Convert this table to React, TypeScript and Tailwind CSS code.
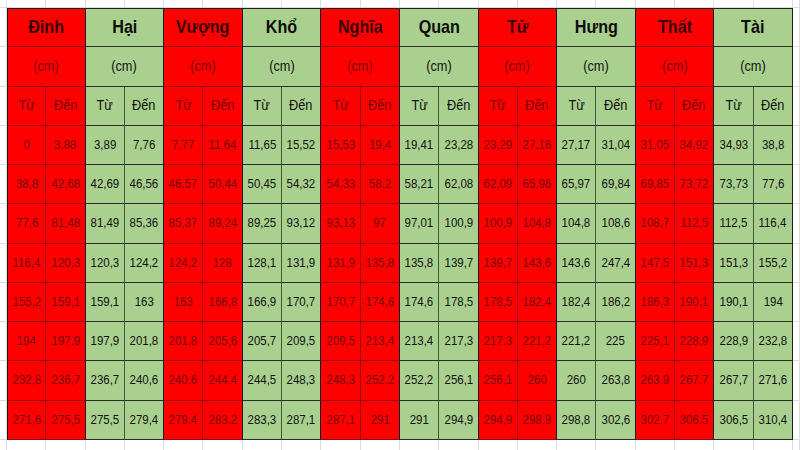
import React from "react";

type Group = { name: string; red: boolean; rows: [string, string][] };

const groups: Group[] = [
  { name: "Đinh", red: true, rows: [["0", "3,88"], ["38,8", "42,68"], ["77,6", "81,48"], ["116,4", "120,3"], ["155,2", "159,1"], ["194", "197,9"], ["232,8", "236,7"], ["271,6", "275,5"]] },
  { name: "Hại", red: false, rows: [["3,89", "7,76"], ["42,69", "46,56"], ["81,49", "85,36"], ["120,3", "124,2"], ["159,1", "163"], ["197,9", "201,8"], ["236,7", "240,6"], ["275,5", "279,4"]] },
  { name: "Vượng", red: true, rows: [["7,77", "11,64"], ["46,57", "50,44"], ["85,37", "89,24"], ["124,2", "128"], ["163", "166,8"], ["201,8", "205,6"], ["240,6", "244,4"], ["279,4", "283,2"]] },
  { name: "Khổ", red: false, rows: [["11,65", "15,52"], ["50,45", "54,32"], ["89,25", "93,12"], ["128,1", "131,9"], ["166,9", "170,7"], ["205,7", "209,5"], ["244,5", "248,3"], ["283,3", "287,1"]] },
  { name: "Nghĩa", red: true, rows: [["15,53", "19,4"], ["54,33", "58,2"], ["93,13", "97"], ["131,9", "135,8"], ["170,7", "174,6"], ["209,5", "213,4"], ["248,3", "252,2"], ["287,1", "291"]] },
  { name: "Quan", red: false, rows: [["19,41", "23,28"], ["58,21", "62,08"], ["97,01", "100,9"], ["135,8", "139,7"], ["174,6", "178,5"], ["213,4", "217,3"], ["252,2", "256,1"], ["291", "294,9"]] },
  { name: "Tử", red: true, rows: [["23,29", "27,16"], ["62,09", "65,96"], ["100,9", "104,8"], ["139,7", "143,6"], ["178,5", "182,4"], ["217,3", "221,2"], ["256,1", "260"], ["294,9", "298,8"]] },
  { name: "Hưng", red: false, rows: [["27,17", "31,04"], ["65,97", "69,84"], ["104,8", "108,6"], ["143,6", "247,4"], ["182,4", "186,2"], ["221,2", "225"], ["260", "263,8"], ["298,8", "302,6"]] },
  { name: "Thất", red: true, rows: [["31,05", "34,92"], ["69,85", "73,72"], ["108,7", "112,5"], ["147,5", "151,3"], ["186,3", "190,1"], ["225,1", "228,9"], ["263,9", "267,7"], ["302,7", "306,5"]] },
  { name: "Tài", red: false, rows: [["34,93", "38,8"], ["73,73", "77,6"], ["112,5", "116,4"], ["151,3", "155,2"], ["190,1", "194"], ["228,9", "232,8"], ["267,7", "271,6"], ["306,5", "310,4"]] },
];

const font = { fontFamily: '"Liberation Sans", Arial, sans-serif' };

function Margin({ k }: { k: string }) {
  return <div key={k} className="border-r border-b border-[#dcdcdc] bg-white" />;
}

function cellBase(red: boolean) {
  return red
    ? "bg-[#fe0000] text-[#6a0000] border-b border-b-[#8e0d0d]"
    : "bg-[#a9d08e] text-[#111111] border-b border-b-[#2c2c2c]";
}

export default function App() {
  const cells: React.ReactNode[] = [];
  // top strip
  for (let i = 0; i < 22; i++) cells.push(<Margin k={`t${i}`} key={`t${i}`} />);

  // header row 1: names
  cells.push(<Margin k="l0" key="l0" />);
  groups.forEach((g, gi) => {
    cells.push(
      <div
        key={`h${gi}`}
        className={`col-span-2 flex items-center justify-center border-t border-t-[#222] border-r border-r-[#1c1c1c] ${gi === 0 ? "border-l border-l-[#1c1c1c]" : ""} ${cellBase(g.red)}`}
      >
        <span className={`inline-block scale-x-[0.85] text-[19px] font-bold ${g.red ? "text-[#3a0000]" : "text-[#0d0d0d]"}`}>{g.name}</span>
      </div>
    );
  });
  cells.push(<Margin k="r0" key="r0" />);

  // header row 2: (cm)
  cells.push(<Margin k="l1" key="l1" />);
  groups.forEach((g, gi) => {
    cells.push(
      <div
        key={`c${gi}`}
        className={`col-span-2 flex items-center justify-center border-r border-r-[#1c1c1c] ${gi === 0 ? "border-l border-l-[#1c1c1c]" : ""} ${cellBase(g.red)}`}
      >
        <span className={`inline-block scale-x-[0.85] text-[15px] ${g.red ? "text-[#7a0303]" : ""}`}>(cm)</span>
      </div>
    );
  });
  cells.push(<Margin k="r1" key="r1" />);

  // header row 3: Từ / Đến + data rows
  const rowsData: [string, string][][] = [
    groups.map(() => ["Từ", "Đến"] as [string, string]),
    ...Array.from({ length: 8 }, (_, r) => groups.map((g) => g.rows[r])),
  ];

  rowsData.forEach((row, ri) => {
    cells.push(<Margin k={`l${ri + 2}`} key={`l${ri + 2}`} />);
    row.forEach(([a, b], gi) => {
      const g = groups[gi];
      const inner = g.red ? "border-r border-r-[#8e0d0d]" : "border-r border-r-[#44553a]";
      const size = ri === 0 ? "text-[15px]" : "text-[13.5px]";
      const col = g.red ? "text-[#760404]" : "";
      cells.push(
        <div
          key={`a${ri}-${gi}`}
          className={`flex items-center justify-center ${inner} ${gi === 0 ? "border-l border-l-[#1c1c1c]" : ""} ${cellBase(g.red)}`}
        >
          <span className={`inline-block scale-x-[0.85] ${size} ${col}`}>{a}</span>
        </div>
      );
      cells.push(
        <div
          key={`b${ri}-${gi}`}
          className={`flex items-center justify-center border-r border-r-[#1c1c1c] ${cellBase(g.red)}`}
        >
          <span className={`inline-block scale-x-[0.85] ${size} ${col}`}>{b}</span>
        </div>
      );
    });
    cells.push(<Margin k={`r${ri + 2}`} key={`r${ri + 2}`} />);
  });

  for (let i = 0; i < 22; i++) cells.push(<div key={`bt${i}`} className="border-r border-[#dcdcdc] bg-white" />);

  return (
    <div
      className="grid h-[450px] w-[800px] grid-cols-[7px_repeat(20,minmax(0,1fr))_7px] grid-rows-[8px_repeat(11,minmax(0,1fr))_10px] overflow-hidden bg-white"
      style={font}
    >
      {cells}
    </div>
  );
}
